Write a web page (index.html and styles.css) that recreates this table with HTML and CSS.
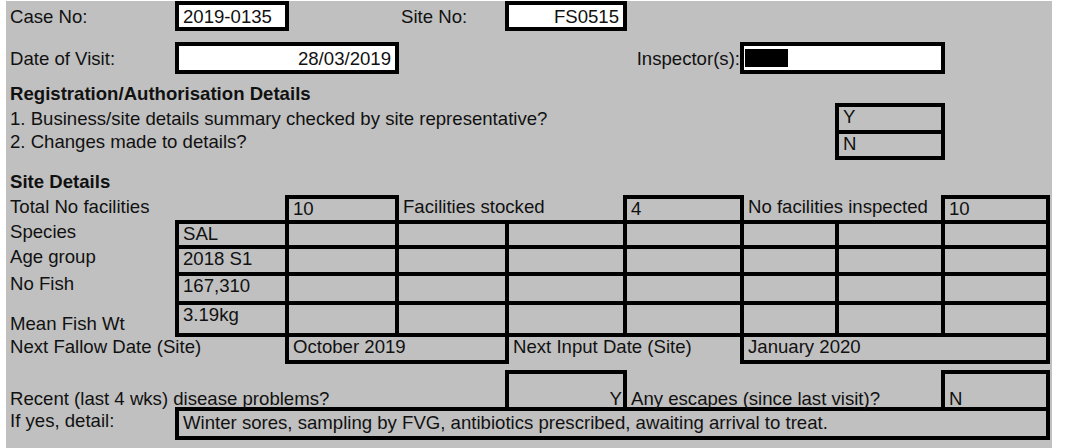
FILE: index.html
```html
<!DOCTYPE html>
<html lang="en">
<head>
<meta charset="utf-8">
<title>Inspection Form</title>
<link rel="stylesheet" href="styles.css">
</head>
<body>
<div class="sheet">
<table class="form">
<colgroup>
<col class="c1"><col class="c2"><col class="c3"><col class="c4"><col class="c5"><col class="c6"><col class="c7"><col class="c8"><col class="c9">
</colgroup>
<tr class="r-a">
<td class="mid">Case No:</td>
<td class="box white mid">2019-0135</td>
<td></td>
<td class="mid">Site No:</td>
<td class="box white mid right">FS0515</td>
<td colspan="4"></td>
</tr>
<tr class="r-gap-a"><td colspan="9"></td></tr>
<tr class="r-b">
<td class="mid">Date of Visit:</td>
<td colspan="2" class="box white mid right">28/03/2019</td>
<td colspan="2"></td>
<td class="mid right tight">Inspector(s):</td>
<td colspan="2" class="box white mid nopad"><span class="redact"></span></td>
<td></td>
</tr>
<tr class="r-reg">
<td colspan="9" class="bold bottom lift-sm">Registration/Authorisation Details</td>
</tr>
<tr class="r-biz">
<td colspan="7" class="mid">1. Business/site details summary checked by site representative?</td>
<td class="box">Y</td>
<td></td>
</tr>
<tr class="r-chg">
<td colspan="7">2. Changes made to details?</td>
<td class="box">N</td>
<td></td>
</tr>
<tr class="r-gap-b"><td colspan="9"></td></tr>
<tr class="r-site">
<td colspan="9" class="bold">Site Details</td>
</tr>
<tr class="r-total">
<td colspan="2">Total No facilities</td>
<td class="box">10</td>
<td colspan="2">Facilities stocked</td>
<td class="box">4</td>
<td colspan="2">No facilities inspected</td>
<td class="box">10</td>
</tr>
<tr class="r-species">
<td>Species</td>
<td class="box">SAL</td>
<td class="box"></td><td class="box"></td><td class="box"></td><td class="box"></td><td class="box"></td><td class="box"></td><td class="box"></td>
</tr>
<tr class="r-age">
<td>Age group</td>
<td class="box">2018 S1</td>
<td class="box"></td><td class="box"></td><td class="box"></td><td class="box"></td><td class="box"></td><td class="box"></td><td class="box"></td>
</tr>
<tr class="r-fish">
<td>No Fish</td>
<td class="box">167,310</td>
<td class="box"></td><td class="box"></td><td class="box"></td><td class="box"></td><td class="box"></td><td class="box"></td><td class="box"></td>
</tr>
<tr class="r-mean">
<td class="bottom lift">Mean Fish Wt</td>
<td class="box">3.19kg</td>
<td class="box"></td><td class="box"></td><td class="box"></td><td class="box"></td><td class="box"></td><td class="box"></td><td class="box"></td>
</tr>
<tr class="r-fallow">
<td colspan="2">Next Fallow Date (Site)</td>
<td colspan="2" class="box">October 2019</td>
<td colspan="2">Next Input Date (Site)</td>
<td colspan="3" class="box">January 2020</td>
</tr>
<tr class="r-gap-c"><td colspan="9"></td></tr>
<tr class="r-recent">
<td colspan="4" class="bottom">Recent (last 4 wks) disease problems?</td>
<td class="box bottom right tightr">Y</td>
<td colspan="3" class="bottom">Any escapes (since last visit)?</td>
<td class="box bottom">N</td>
</tr>
<tr class="r-ifyes">
<td class="drop">If yes, detail:</td>
<td colspan="8" class="box drop">Winter sores, sampling by FVG, antibiotics prescribed, awaiting arrival to treat.</td>
</tr>
</table>
</div>
</body>
</html>
```

FILE: styles.css
```css
html, body {
  margin: 0;
  padding: 0;
  background: #ffffff;
}

.sheet {
  margin: 1px 0 0 6px;
  width: 1046px;
  height: 447px;
  background: #c0c0c0;
  overflow: hidden;
}

.form {
  width: 1042px;
  table-layout: fixed;
  border-collapse: collapse;
  font-family: "Liberation Sans", Arial, sans-serif;
  font-size: 18.6px;
  line-height: 16px;
  color: #111111;
}

.c1 { width: 171px; }
.c2 { width: 110px; }
.c3 { width: 110px; }
.c4 { width: 110px; }
.c5 { width: 118px; }
.c6 { width: 117px; }
.c7 { width: 95px; }
.c8 { width: 106px; }
.c9 { width: 105px; }

.form td {
  padding: 2px 4px 0;
  white-space: nowrap;
  vertical-align: top;
  overflow: visible;
}

.form td.box {
  border: 4px solid #000000;
}

.form td.white {
  background: #ffffff;
}

.form td.mid { vertical-align: middle; padding-top: 1px; }
.form td.bottom { vertical-align: bottom; padding-top: 0; }
.form td.lift { padding-bottom: 3px; }
.form td.lift-sm { padding-bottom: 1px; }
.form td.drop { padding-top: 4px; }
.form td.right { text-align: right; }
.form td.tight { padding-right: 0; }
.form td.tightr { padding-right: 1px; }
.form td.nopad { padding: 0 0 0 1px; }
.bold { font-weight: bold; }

.redact {
  display: inline-block;
  width: 43px;
  height: 18px;
  background: #000000;
  vertical-align: middle;
}

.r-a { height: 26px; }
.r-gap-a { height: 15px; }
.r-b { height: 28px; }
.r-reg { height: 33px; }
.r-biz { height: 27px; }
.r-chg { height: 26px; }
.r-gap-b { height: 14px; }
.r-site { height: 25px; }
.r-total { height: 25px; }
.r-species { height: 25px; }
.r-age { height: 27px; }
.r-fish { height: 29px; }
.r-mean { height: 32px; }
.r-fallow { height: 27px; }
.r-gap-c { height: 10px; }
.r-recent { height: 37px; }
.r-ifyes { height: 29px; }
```
